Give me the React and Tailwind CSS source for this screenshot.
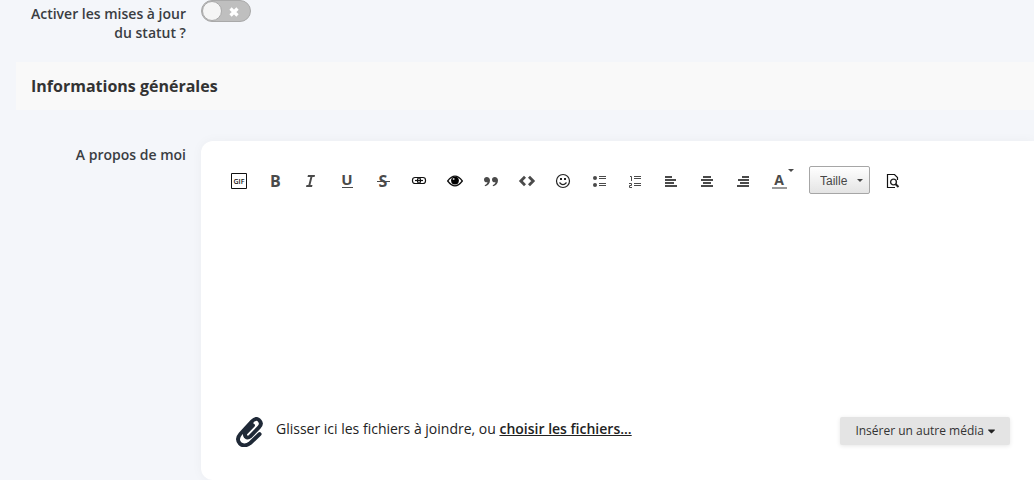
import { useState } from "react";
import { FaCaretDown } from "react-icons/fa";

const SIZES = ["Taille", "8", "10", "12", "14", "18", "24"];

const LETTER_FONT = '"Open Sans", sans-serif';

const TOOLS = [
  {
    name: "GIF",
    icon: (
      <>
        <path d="M.5 .5h15v15h-15z" fill="none" stroke="#111" />
        <text x="8" y="11" fontSize="7" fontWeight="600" textAnchor="middle" fill="#111" fontFamily={LETTER_FONT}>
          GIF
        </text>
      </>
    ),
  },
  {
    name: "Gras",
    icon: (
      <text x="3" y="14" fontSize="16" fontWeight="700" fontFamily={LETTER_FONT}>
        B
      </text>
    ),
  },
  {
    name: "Italique",
    icon: <path d="M5 2h7l-.4 2h-2.2l-2 8h2.1l-.5 2H3l.5-2h1.9l2-8H4.5z" />,
  },
  {
    name: "Souligné",
    icon: (
      <>
        <text x="8" y="12" fontSize="15" fontWeight="700" textAnchor="middle" fontFamily={LETTER_FONT}>
          U
        </text>
        <path d="M3 14h11v1H3z" />
      </>
    ),
  },
  {
    name: "Barré",
    icon: (
      <>
        <text x="8" y="14" fontSize="16" fontWeight="700" textAnchor="middle" fontFamily={LETTER_FONT}>
          S
        </text>
        <path d="M2 8h13v1H2z" />
      </>
    ),
  },
  {
    name: "Lien",
    icon: (
      <g fill="none" stroke="#111" strokeWidth="1.2">
        <rect x="1.5" y="4.5" width="8" height="6" rx="2.5" />
        <rect x="6.5" y="4.5" width="8" height="6" rx="2.5" />
        <path d="M4 7.5h8" />
      </g>
    ),
  },
  {
    name: "Masqué",
    icon: (
      <>
        <path d="M.7 8Q8-1.6 15.3 8Q8 17.6 .7 8z" fill="#fff" stroke="#111" strokeWidth="1.3" />
        <circle cx="8" cy="7.6" r="3.9" fill="#000" />
        <circle cx="6.6" cy="6" r="1" fill="#ccc" />
      </>
    ),
  },
  {
    name: "Citation",
    icon: (
      <>
        <path d="M3.7 4C5.6 4 7 5.3 7 7.4C7 10.3 5 12.3 2 13.2L1.7 12.3C3.5 11.5 4.4 10.4 4.5 9.3C2.5 9.7 1 8.4 1 6.7C1 5.1 2.2 4 3.7 4z" />
        <path d="M11.7 4C13.6 4 15 5.3 15 7.4C15 10.3 13 12.3 10 13.2L9.7 12.3C11.5 11.5 12.4 10.4 12.5 9.3C10.5 9.7 9 8.4 9 6.7C9 5.1 10.2 4 11.7 4z" />
      </>
    ),
  },
  {
    name: "Code",
    icon: <path d="M6 3.7L1.8 8l4.2 4.3M10 3.7L14.2 8L10 12.3" fill="none" stroke="#4a4a4a" strokeWidth="2.8" />,
  },
  {
    name: "Émoticônes",
    icon: (
      <>
        <circle cx="8" cy="8" r="6.5" fill="none" stroke="#222" strokeWidth="1.2" />
        <path d="M5 5h2v2H5zM9 5h2v2H9z" fill="#222" />
        <path d="M4.5 9.5Q8 13.8 11.5 9.5" fill="none" stroke="#222" strokeWidth="1.2" />
      </>
    ),
  },
  {
    name: "Liste à puces",
    icon: (
      <>
        <circle cx="4" cy="5" r="2" />
        <circle cx="4" cy="12" r="2" />
        <path d="M8 3h7v1H8zM8 5h7v1H8zM8 10h7v1H8zM8 12h7v1H8z" />
      </>
    ),
  },
  {
    name: "Liste numérotée",
    icon: (
      <>
        <path d="M3 3.5h1.5V8M2 10.5h2.5v2h-2v2H5" fill="none" stroke="#4a4a4a" />
        <path d="M7 3h7v1H7zM7 5h7v1H7zM7 10h7v1H7zM7 12h7v1H7z" />
      </>
    ),
  },
  { name: "Aligner à gauche", icon: <path d="M2 3h7v2H2zM2 6h11v2H2zM2 9h9v2H2zM2 12h12v2H2z" /> },
  { name: "Centrer", icon: <path d="M4 3h8v2H4zM2 6h12v2H2zM4 9h8v2H4zM2 12h12v2H2z" /> },
  { name: "Aligner à droite", icon: <path d="M7 3h7v2H7zM3 6h11v2H3zM5 9h9v2H5zM2 12h12v2H2z" /> },
];

function ToolButton({ name, children }) {
  return (
    <button
      type="button"
      title={name}
      aria-label={name}
      className="flex h-7 w-9 items-center justify-center rounded pt-0.5 hover:bg-gray-100"
    >
      <svg viewBox="0 0 16 16" className="size-4 overflow-visible" fill="#4a4a4a">
        {children}
      </svg>
    </button>
  );
}

function Toolbar() {
  const [size, setSize] = useState("Taille");

  return (
    <div className="flex flex-wrap items-center px-5">
      {TOOLS.map((tool) => (
        <ToolButton key={tool.name} name={tool.name}>
          {tool.icon}
        </ToolButton>
      ))}
      <ToolButton name="Couleur du texte">
        <text x="8" y="12" fontSize="14" fontWeight="700" textAnchor="middle" fontFamily={LETTER_FONT}>
          A
        </text>
        <path d="M1 14h15v2H1z" fill="#999" />
        <path d="M17-4h6l-3 3z" />
      </ToolButton>

      {/* Text size */}
      <div className="relative ml-3">
        <select
          aria-label="Taille"
          value={size}
          onChange={(e) => setSize(e.target.value)}
          className="block h-7 w-[61px] appearance-none rounded-xs border border-[#a6a6a6] bg-linear-to-b from-white to-[#e4e4e4] pt-px pl-2.5 font-['Liberation_Sans',sans-serif] text-xs text-[#474747]"
        >
          {SIZES.map((s) => (
            <option key={s}>{s}</option>
          ))}
        </select>
        <svg viewBox="0 0 6 3" className="pointer-events-none absolute top-[13px] right-[7px] h-[3px] w-1.5" fill="#474747">
          <path d="M0 0h6L3 3z" />
        </svg>
      </div>

      <div className="ml-1">
        <ToolButton name="Aperçu">
          <path d="M13.5 7V4.5l-3-3h-7v13H11" fill="none" stroke="#111" strokeWidth="1.2" />
          <circle cx="9.5" cy="9" r="2.9" fill="none" stroke="#222" strokeWidth="1.4" />
          <path d="M11.5 11l3 3" stroke="#222" strokeWidth="2" />
        </ToolButton>
      </div>
    </div>
  );
}

function Paperclip() {
  return (
    <svg viewBox="0 0 81 90" className="h-[30px] w-[27px] shrink-0" fill="none" stroke="#1f2937" strokeWidth="11.5" strokeLinecap="round">
      <path d="M71 51L43 78Q24 92 11 79Q0 66 13 51L48 13Q61 0 70 10Q80 20 69 31L43 58Q35 65 29 59Q24 53 30 47L51 25" />
    </svg>
  );
}

export default function App() {
  const [statusUpdates, setStatusUpdates] = useState(false);
  const [about, setAbout] = useState("");

  return (
    <div className="bg-[#f4f6fa] font-['Open_Sans',sans-serif] text-sm text-[#3a3d42]">
      {/* Status updates */}
      <div className="flex min-h-[62px] items-start">
        <label htmlFor="status" className="w-[201px] shrink-0 pt-1 pr-[15px] pl-4 text-right leading-[19px] font-semibold">
          Activer les mises à jour du statut ?
        </label>
        <div className="relative h-[22px] w-[50px]">
          <input
            id="status"
            type="checkbox"
            checked={statusUpdates}
            onChange={(e) => setStatusUpdates(e.target.checked)}
            className="peer block h-full w-full cursor-pointer appearance-none rounded-full border border-[#a9a9a9] bg-[#bfbfbf] checked:bg-[#6fae6f]"
          />
          <span className="pointer-events-none absolute top-px left-px size-5 rounded-full border border-[#a9a9a9] bg-[#f5f5f5] peer-checked:left-[29px]" />
          <svg viewBox="0 0 10 10" className="pointer-events-none absolute top-[7px] left-7 size-2.5 peer-checked:hidden">
            <path d="M1.5 1.5l7 7M8.5 1.5l-7 7" stroke="#fff" strokeWidth="3.2" />
          </svg>
        </div>
      </div>

      <h2 className="ml-4 bg-[#f9f9f9] px-[15px] py-3 text-base font-bold text-[#333]">
        Informations générales
      </h2>

      {/* About me */}
      <div className="flex items-start pt-[31px]">
        <label htmlFor="about" className="w-[201px] shrink-0 pt-1 pr-[15px] text-right leading-[19px] font-semibold">
          A propos de moi
        </label>
        <div className="min-w-0 flex-1 rounded-l-xl bg-white pt-[25px] shadow-[0_0_12px_rgba(0,0,0,0.04)]">
          <Toolbar />
          <textarea
            id="about"
            value={about}
            onChange={(e) => setAbout(e.target.value)}
            className="block h-[223px] w-full resize-none bg-transparent px-8 py-4 outline-none"
          />
          <div className="flex items-start justify-between pr-6 pb-[33px] pl-[35px]">
            <div className="flex items-start text-[#222]">
              <Paperclip />
              <p className="ml-[13px] pt-0.5">
                Glisser ici les fichiers à joindre, ou{" "}
                <a href="#fichiers" className="font-semibold underline">
                  choisir les fichiers...
                </a>
              </p>
            </div>
            <button
              type="button"
              className="flex h-7 items-center gap-1 rounded-xs bg-[#e4e4e4] px-[15px] text-xs text-[#333] shadow-[0_1px_4px_rgba(0,0,0,0.1)]"
            >
              Insérer un autre média
              <FaCaretDown className="h-3 w-[7px] text-[#222]" preserveAspectRatio="xMidYMid slice" />
            </button>
          </div>
        </div>
      </div>
    </div>
  );
}
